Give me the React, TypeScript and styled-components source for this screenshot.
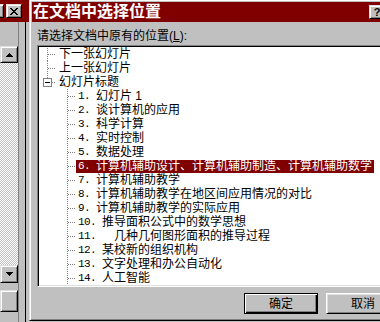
import styled, { createGlobalStyle } from "styled-components";

const GlobalStyle = createGlobalStyle`
  html, body {
    margin: 0;
    padding: 0;
    background: #c0c0c0;
  }
  body {
    width: 380px;
    height: 322px;
    overflow: hidden;
    font-family: "Liberation Sans", "Noto Sans CJK SC", sans-serif;
  }
`;

interface ITreeItem {
  num?: string;
  text: string;
  level: number;
  expander?: boolean;
  selected?: boolean;
}

const items: ITreeItem[] = [
  { text: "下一张幻灯片", level: 0 },
  { text: "上一张幻灯片", level: 0 },
  { text: "幻灯片标题", level: 0, expander: true },
  { num: "1. ", text: "幻灯片 1", level: 1 },
  { num: "2. ", text: "谈计算机的应用", level: 1 },
  { num: "3. ", text: "科学计算", level: 1 },
  { num: "4. ", text: "实时控制", level: 1 },
  { num: "5. ", text: "数据处理", level: 1 },
  {
    num: "6. ",
    text: "计算机辅助设计、计算机辅助制造、计算机辅助数学",
    level: 1,
    selected: true,
  },
  { num: "7. ", text: "计算机辅助教学", level: 1 },
  { num: "8. ", text: "计算机辅助教学在地区间应用情况的对比", level: 1 },
  { num: "9. ", text: "计算机辅助教学的实际应用", level: 1 },
  { num: "10. ", text: "推导面积公式中的数学思想", level: 1 },
  { num: "11.   ", text: "几种几何图形面积的推导过程", level: 1 },
  { num: "12. ", text: "某校新的组织机构", level: 1 },
  { num: "13. ", text: "文字处理和办公自动化", level: 1 },
  { num: "14. ", text: "人工智能", level: 1 },
];

const Screen = styled.div`
  display: flex;
  width: 380px;
  height: 322px;
  overflow: hidden;
  background: #c0c0c0;
`;

/* the window behind the dialog, only its right edge shows */
const ParentWindow = styled.div`
  flex: none;
  width: 29px;
  display: flex;
  flex-direction: column;
  overflow: hidden;
`;

const ParentTitle = styled.div`
  flex: none;
  height: 22px;
  background: #800000;
  display: flex;
  align-items: center;
  justify-content: flex-end;
  gap: 2px;
  padding-right: 7px;
  box-sizing: border-box;
`;

const ParentBody = styled.div`
  flex: 1;
  display: flex;
`;

const ScrollColumn = styled.div`
  flex: none;
  width: 18px;
  display: flex;
  flex-direction: column;
  padding-top: 24px;
`;

const Track = styled.div`
  height: 202px;
  background: repeating-conic-gradient(#ffffff 0 25%, #c0c0c0 0 50%) 0 0 / 2px 2px;
`;

const FrameEdge = styled.div`
  flex: 1;
  border-left: 1px solid #808080;
  border-right: 1px solid #000;
  margin-right: 3px;
`;

const RaisedButton = styled.div<{ $w: number; $h: number }>`
  flex: none;
  width: ${(p) => p.$w}px;
  height: ${(p) => p.$h}px;
  box-sizing: border-box;
  background: #c0c0c0;
  border: 1px solid;
  border-color: #dfdfdf #000 #000 #dfdfdf;
  box-shadow: inset 1px 1px #fff, inset -1px -1px #808080;
  display: flex;
  align-items: center;
  justify-content: center;
  color: #000;
  font-family: "Liberation Sans", sans-serif;
  font-weight: bold;
  font-size: 11px;
  line-height: 1;
`;

const LowerButton = styled(RaisedButton)`
  margin-top: 7px;
`;

const Dialog = styled.div`
  flex: none;
  width: 379px;
  height: 322px;
  margin-top: -1px;
  box-sizing: border-box;
  border: 1px solid;
  border-color: #dfdfdf #000 #000 #dfdfdf;
  box-shadow: inset 1px 1px #fff, inset -1px -1px #808080;
  padding: 2px;
  display: flex;
  flex-direction: column;
  background: #c0c0c0;
`;

const TitleBar = styled.div`
  flex: none;
  height: 20px;
  background: #800000;
  display: flex;
  align-items: center;
  justify-content: space-between;
  padding: 0 2px 0 1px;
`;

const Title = styled.span`
  color: #fff;
  font-weight: bold;
  font-size: 16px;
  line-height: 20px;
`;

const TitleButtons = styled.div`
  display: flex;
  gap: 2px;
`;

const Body = styled.div`
  flex: 1;
  display: flex;
  flex-direction: column;
  padding: 7px 5px 0 5px;
`;

const Label = styled.div`
  font-size: 12px;
  line-height: 14px;
  color: #000;
  margin-bottom: 2px;
  white-space: pre;
`;

const TreeBox = styled.div`
  height: 242px;
  box-sizing: border-box;
  background: #fff;
  border: 1px solid;
  border-color: #808080 #fff #fff #808080;
  box-shadow: inset 1px 1px #000, inset -1px -1px #dfdfdf;
  padding: 1px;
  overflow: hidden;
`;

const Row = styled.div`
  height: 14px;
  display: flex;
  align-items: center;
  white-space: pre;
`;

const Connector = styled.svg`
  flex: none;
  display: block;
`;

const ItemLabel = styled.span<{ $selected?: boolean }>`
  display: flex;
  align-items: center;
  height: 13px;
  padding: 0 2px;
  font-size: 12px;
  line-height: 13px;
  color: ${(p) => (p.$selected ? "#fff" : "#000")};
  background: ${(p) => (p.$selected ? "#800000" : "transparent")};
`;

const Num = styled.span`
  font-family: "Liberation Mono", monospace;
  font-size: 11px;
  letter-spacing: -0.6px;
`;

const ButtonRow = styled.div`
  display: flex;
  justify-content: flex-end;
  gap: 8px;
  margin-top: 6px;
`;

const DialogButton = styled.div<{ $default?: boolean }>`
  width: 74px;
  height: 21px;
  box-sizing: border-box;
  background: #c0c0c0;
  border: 1px solid;
  border-color: ${(p) => (p.$default ? "#000" : "#fff #000 #000 #fff")};
  box-shadow: ${(p) =>
    p.$default
      ? "inset 1px 1px #fff, inset -1px -1px #000, inset -2px -2px #808080"
      : "inset 1px 1px #dfdfdf, inset -1px -1px #808080"};
  display: flex;
  align-items: center;
  justify-content: center;
  font-size: 12px;
  line-height: 14px;
  color: #000;
`;

function Arrow({ down }: { down?: boolean }) {
  return (
    <svg width="7" height="4" viewBox="0 0 7 4" shapeRendering="crispEdges">
      <path
        d={down ? "M0 0h7v1h-1v1h-1v1h-1v1h-1v-1h-1v-1h-1v-1h-1z" : "M3 0h1v1h1v1h1v1h1v1h-7v-1h1v-1h1v-1h1z"}
        fill="#000"
      />
    </svg>
  );
}

function CloseGlyph() {
  return (
    <svg width="8" height="7" viewBox="0 0 8 7" shapeRendering="crispEdges">
      <path
        d="M0 0h2v1h1v1h2v-1h1v-1h2v1h-1v1h-1v1h-1v1h1v1h1v1h1v1h-2v-1h-1v-1h-2v1h-1v1h-2v-1h1v-1h1v-1h1v-1h-1v-1h-1v-1h-1z"
        fill="#000"
      />
    </svg>
  );
}

const DOT = { stroke: "#808080", strokeDasharray: "1 1" };

function TreeLines({ item, index }: { item: ITreeItem; index: number }) {
  if (item.level === 0) {
    return (
      <Connector width="18" height="14" shapeRendering="crispEdges">
        <line x1="8.5" y1={index === 0 ? 1 : 0} x2="8.5" y2={item.expander ? 3 : 14} {...DOT} />
        <line x1={item.expander ? 13 : 9} y1="7.5" x2="17" y2="7.5" {...DOT} />
        {item.expander && (
          <>
            <rect x="4.5" y="3.5" width="8" height="8" fill="#fff" stroke="#808080" />
            <line x1="6" y1="7.5" x2="11" y2="7.5" stroke="#000" />
          </>
        )}
      </Connector>
    );
  }
  return (
    <Connector width="37" height="14" shapeRendering="crispEdges">
      <line x1="28.5" y1="0" x2="28.5" y2="14" {...DOT} />
      <line x1="29" y1="7.5" x2="37" y2="7.5" {...DOT} />
    </Connector>
  );
}

export default function App() {
  return (
    <>
      <GlobalStyle />
      <Screen>
        <ParentWindow>
          <ParentTitle>
            <RaisedButton $w={16} $h={14} />
            <RaisedButton $w={16} $h={14}>
              <CloseGlyph />
            </RaisedButton>
          </ParentTitle>
          <ParentBody>
            <ScrollColumn>
              <RaisedButton $w={18} $h={17}>
                <Arrow />
              </RaisedButton>
              <Track />
              <RaisedButton $w={18} $h={18}>
                <Arrow down />
              </RaisedButton>
              <LowerButton $w={18} $h={22} />
            </ScrollColumn>
            <FrameEdge />
          </ParentBody>
        </ParentWindow>
        <Dialog>
          <TitleBar>
            <Title>在文档中选择位置</Title>
            <TitleButtons>
              <RaisedButton $w={16} $h={14}>?</RaisedButton>
              <RaisedButton $w={16} $h={14}>
                <CloseGlyph />
              </RaisedButton>
            </TitleButtons>
          </TitleBar>
          <Body>
            <Label>
              请选择文档中原有的位置(<u>L</u>):
            </Label>
            <TreeBox>
              {items.map((item, i) => (
                <Row key={i}>
                  <TreeLines item={item} index={i} />
                  <ItemLabel $selected={item.selected}>
                    {item.num && <Num>{item.num}</Num>}
                    {item.text}
                  </ItemLabel>
                </Row>
              ))}
            </TreeBox>
            <ButtonRow>
              <DialogButton $default>确定</DialogButton>
              <DialogButton>取消</DialogButton>
            </ButtonRow>
          </Body>
        </Dialog>
      </Screen>
    </>
  );
}
